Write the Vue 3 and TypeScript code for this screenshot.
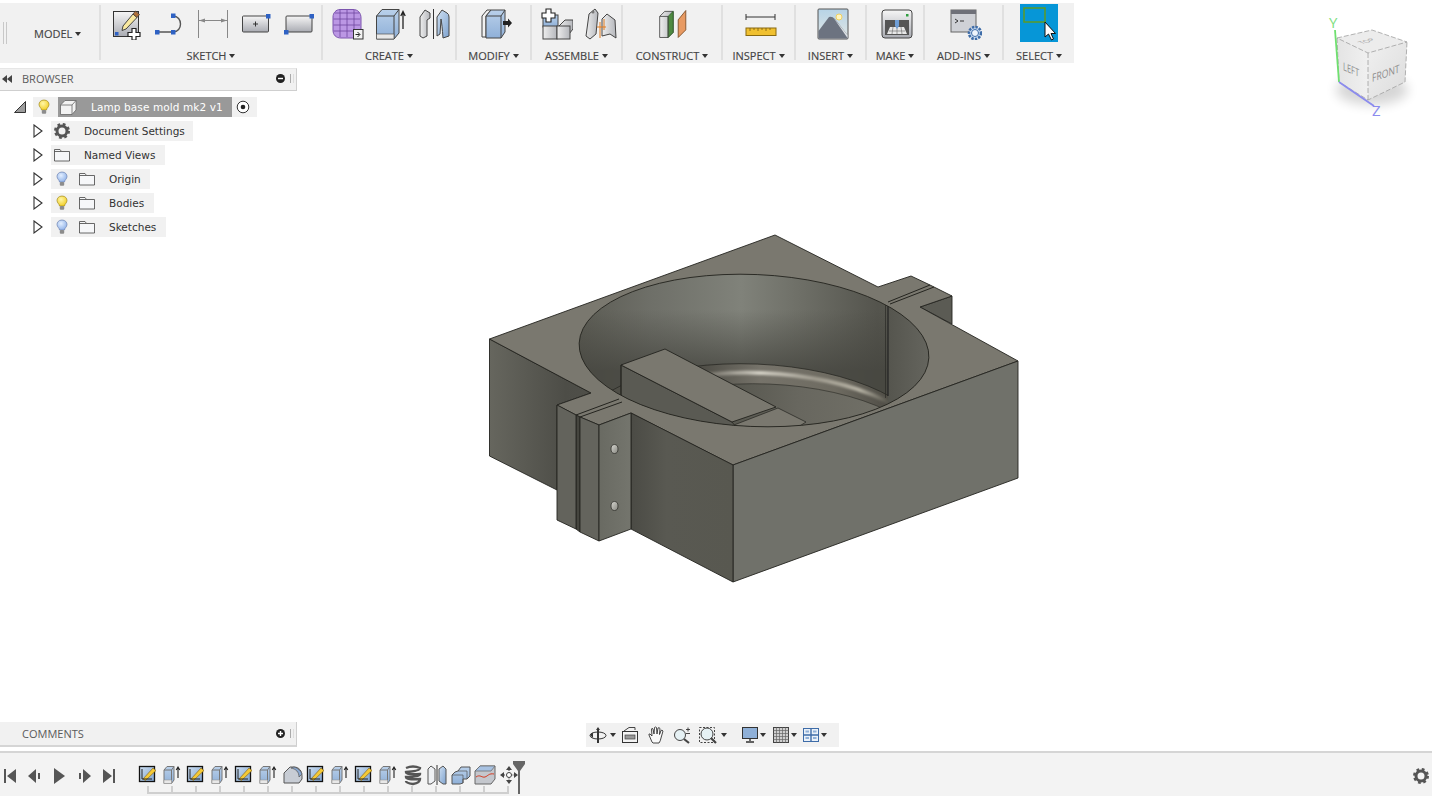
<script setup lang="ts">
interface Tool { id: string; big?: boolean }
interface Group { label: string; cls: string; gap: string; tools: Tool[] }
const groups: Group[] = [
  { label: 'SKETCH', cls: 'w222', gap: 'g11', tools: [{ id: 'i-sketch' }, { id: 'i-line' }, { id: 'i-dim' }, { id: 'i-crect' }, { id: 'i-rect' }] },
  { label: 'CREATE', cls: 'w134', gap: 'g11', tools: [{ id: 'i-form' }, { id: 'i-extrude' }, { id: 'i-mirror' }] },
  { label: 'MODIFY', cls: 'w75', gap: 'g11', tools: [{ id: 'i-press' }] },
  { label: 'ASSEMBLE', cls: 'w91', gap: 'g12', tools: [{ id: 'i-comp' }, { id: 'i-joint' }] },
  { label: 'CONSTRUCT', cls: 'w100', gap: 'g11', tools: [{ id: 'i-plane' }] },
  { label: 'INSPECT', cls: 'w73', gap: 'g11', tools: [{ id: 'i-measure' }] },
  { label: 'INSERT', cls: 'w71', gap: 'g11', tools: [{ id: 'i-image' }] },
  { label: 'MAKE', cls: 'w58', gap: 'g11', tools: [{ id: 'i-make' }] },
  { label: 'ADD-INS', cls: 'w79', gap: 'g11', tools: [{ id: 'i-addin' }] },
]
const timeline: string[] = ['t-sk', 't-ex', 't-sk', 't-ex', 't-sk', 't-ex', 't-fillet', 't-sk', 't-ex', 't-sk', 't-ex', 't-coil', 't-mirror', 't-combine', 't-section', 't-move']
const playback: string[] = ['p-first', 'p-prev', 'p-play', 'p-next', 'p-last']
interface Node { name: string; bulb?: string; icon: string; width: string }
const nodes: Node[] = [
  { name: 'Document Settings', icon: 'gear', width: 'w142' },
  { name: 'Named Views', icon: 'folder', width: 'w114' },
  { name: 'Origin', bulb: 'b-blue', icon: 'folder', width: 'w99' },
  { name: 'Bodies', bulb: 'b-yellow', icon: 'folder', width: 'w103' },
  { name: 'Sketches', bulb: 'b-blue', icon: 'folder', width: 'w115' },
]
</script>

<template>
  <div class="app">
    <svg class="sprite" width="0" height="0" aria-hidden="true">
      <defs>
        <linearGradient id="gGray" x1="0" y1="0" x2="0" y2="1"><stop offset="0" stop-color="#f6f6f6" /><stop offset="1" stop-color="#a9abb2" /></linearGradient>
        <linearGradient id="gBlue" x1="0" y1="0" x2="1" y2="1"><stop offset="0" stop-color="#cfe0f2" /><stop offset="1" stop-color="#7fa3cf" /></linearGradient>
        <linearGradient id="gBlue2" x1="0" y1="0" x2="0" y2="1"><stop offset="0" stop-color="#b9d0ea" /><stop offset="1" stop-color="#8fb0d8" /></linearGradient>
        <linearGradient id="gSilver" x1="0" y1="0" x2="1" y2="0"><stop offset="0" stop-color="#eeeeee" /><stop offset="1" stop-color="#b5b7bc" /></linearGradient>
        <linearGradient id="gSky" x1="0" y1="0" x2="0" y2="1"><stop offset="0" stop-color="#b6d3e6" /><stop offset="1" stop-color="#e2e6e4" /></linearGradient>
        <radialGradient id="gBulbY" cx=".4" cy=".35" r=".7"><stop offset="0" stop-color="#fff6a8" /><stop offset="1" stop-color="#f2cd1f" /></radialGradient>
        <radialGradient id="gBulbB" cx=".4" cy=".35" r=".7"><stop offset="0" stop-color="#e3efff" /><stop offset="1" stop-color="#8db0e8" /></radialGradient>

        <symbol id="i-sketch" viewBox="0 0 32 32">
          <rect x="2.500" y="3.500" width="25" height="25" fill="url(#gGray)" stroke="#333" stroke-width="1" />
          <path d="M12 18 L22 6 L26 9.500 L15 21 L11 22.500Z" fill="#f9e9a0" stroke="#333" stroke-width=".9" />
          <path d="M22 6 L24.500 3 L28.500 6.500 L26 9.500Z" fill="#b0703a" stroke="#333" stroke-width=".7" />
          <rect x="4" y="24" width="3.500" height="3.500" fill="#2f62c4" />
          <path d="M21 20.500h4v4h4v4h-4v3.500h-4v-3.500h-4v-4h4z" fill="#fff" stroke="#222" stroke-width="1.200" />
        </symbol>
        <symbol id="i-line" viewBox="0 0 32 32">
          <path d="M3 24 H19 M19 24 C29 24 29 8 19 8" fill="none" stroke="#555" stroke-width="1.400" />
          <rect x="1" y="22" width="4.500" height="4.500" fill="#2f62c4" /><rect x="17" y="22" width="4.500" height="4.500" fill="#2f62c4" /><rect x="17" y="5.500" width="4.500" height="4.500" fill="#2f62c4" />
        </symbol>
        <symbol id="i-dim" viewBox="0 0 32 32">
          <path d="M1.500 2 V30 M30.500 2 V30 M2 12.500 H30" stroke="#888" stroke-width="1" fill="none" />
          <path d="M2 12.500 L8 10.500 V14.500Z M30 12.500 L24 10.500 V14.500Z" fill="#888" />
        </symbol>
        <symbol id="i-crect" viewBox="0 0 32 32">
          <rect x="2.500" y="8" width="26" height="16" rx="1" fill="url(#gGray)" stroke="#444" /><path d="M13 16h5M15.500 13.500v5" stroke="#333" />
          <rect x="26" y="6" width="4.500" height="4.500" fill="#2f62c4" />
        </symbol>
        <symbol id="i-rect" viewBox="0 0 32 32">
          <rect x="3" y="8" width="26" height="16" rx="1" fill="url(#gGray)" stroke="#444" />
          <rect x="26.500" y="6" width="4.500" height="4.500" fill="#2f62c4" /><rect x="1" y="22" width="4.500" height="4.500" fill="#2f62c4" />
        </symbol>
        <symbol id="i-form" viewBox="0 0 32 32">
          <path d="M8 1.500 H21 C26 1.500 29 5 29 10 V22 C29 27 26 30 21 30 H9 C4 30 1 27 1 22 V9 C1 5 4 1.500 8 1.500Z" fill="#bb97e4" stroke="#7c55ae" />
          <path d="M1.500 11 H28 M1.500 17 H28 M1.500 23 H28 M8 2 V29 M15 2 V29 M22 2 V29 M3 5 H27" stroke="#6f489f" stroke-width=".8" fill="none" />
          <rect x="21.500" y="21.500" width="9.500" height="9.500" fill="#f3f3f3" stroke="#333" /><path d="M23.500 26.500h4M25.500 24l2.500 2.500-2.500 2.500" stroke="#222" fill="none" />
        </symbol>
        <symbol id="i-extrude" viewBox="0 0 32 32">
          <path d="M1.500 8 L7 1.500 H24 V25 L19 31 H1.500Z" fill="url(#gBlue2)" stroke="#444" /><path d="M1.500 8 H19 V31 M19 8 L24 1.500" fill="none" stroke="#444" />
          <path d="M1.500 26 H19 V31 H1.500Z" fill="#e8e8e8" stroke="#555" stroke-width=".7" />
          <path d="M28 21 V5 M25.800 8 L28 3.500 L30.200 8" fill="none" stroke="#222" stroke-width="1.300" />
        </symbol>
        <symbol id="i-mirror" viewBox="0 0 32 32">
          <path d="M15.500 1 V31" stroke="#333" stroke-width="1" />
          <path d="M2 28 V9 L7 2 L12 5 V10 L9 12 V28 L5 30Z" fill="url(#gSilver)" stroke="#444" />
          <path d="M19 28 V9 L24 2 L29 5 Q31 6 31 9 V28 L25 30 Q24 16 23 11 L22 26Z" fill="url(#gBlue)" stroke="#444" />
        </symbol>
        <symbol id="i-press" viewBox="0 0 32 32">
          <path d="M2 8 L7 2 H11 L6 8 V29 H2Z" fill="#f1f1f1" stroke="#444" />
          <path d="M6 8 L11 2 H25 V24 L21 30 H6Z" fill="url(#gBlue2)" stroke="#444" /><path d="M6 8 H21 V30 M21 8 L25 2" stroke="#444" fill="none" />
          <path d="M23 13 H28 V10.500 L32 15 L28 19.500 V17 H23Z" fill="#222" />
        </symbol>
        <symbol id="i-comp" viewBox="0 0 32 32">
          <rect x="2" y="7" width="15" height="12" fill="url(#gBlue2)" stroke="#444" />
          <path d="M17 19 L24 12 H32 V21 L28 26" fill="url(#gSilver)" stroke="#444" />
          <rect x="2" y="18" width="14" height="13" fill="url(#gSilver)" stroke="#444" /><rect x="16" y="18" width="13" height="13" fill="url(#gSilver)" stroke="#444" />
          <path d="M5 1h5v4h4v5h-4v4H5v-4H1V5h4z" fill="#fff" stroke="#222" stroke-width="1.100" />
        </symbol>
        <symbol id="i-joint" viewBox="0 0 32 32">
          <path d="M1 28 L4 6 L10 1 L13 5 L11 26 L5 31Z" fill="url(#gSilver)" stroke="#444" />
          <path d="M17 28 V11 L22 6 L30 12 L31 30 L25 26Z" fill="url(#gSilver)" stroke="#444" />
          <path d="M15 14 V30 M12 19 H21 M19 11 V22" stroke="#e07a1f" stroke-width="1" fill="none" />
          <circle cx="8" cy="4" r="1.500" fill="#777" />
        </symbol>
        <symbol id="i-plane" viewBox="0 0 38 34">
          <path d="M2 8 L8 2 H18 V27 L12 33 H2Z" fill="url(#gSilver)" stroke="#444" />
          <path d="M12 8 L18 2 V27 L12 33Z" fill="#4f8a42" stroke="#2f5d29" />
          <path d="M2 8 H12 V33" fill="none" stroke="#444" />
          <path d="M24 12 L33 1 V24 L24 33Z" fill="#e89a62" stroke="#7a4a22" />
        </symbol>
        <symbol id="i-measure" viewBox="0 0 32 32">
          <path d="M1 6 V12 M30 6 V12 M1 9 H30" stroke="#333" stroke-width="1" fill="none" />
          <rect x="1" y="20" width="30" height="7.500" fill="#f0c030" stroke="#8a6a10" />
          <path d="M5 20v3M9 20v2M13 20v3M17 20v2M21 20v3M25 20v2" stroke="#7a5c10" stroke-width=".8" />
        </symbol>
        <symbol id="i-image" viewBox="0 0 32 32">
          <rect x="1" y="1" width="30" height="30" rx="1" fill="url(#gSky)" stroke="#555" />
          <circle cx="22" cy="9" r="3" fill="#fff5c0" stroke="#f0d060" />
          <path d="M1.500 30.500 V23 L12 9 Q15 8 18 11 L30.500 27 V30.500Z" fill="#6c7380" />
          <path d="M16 9 L30.500 27 V30 Z" fill="#dfe3e6" />
        </symbol>
        <symbol id="i-make" viewBox="0 0 32 32">
          <rect x="1" y="2" width="30" height="28" rx="3" fill="url(#gGray)" stroke="#444" />
          <rect x="4" y="12" width="24" height="15" fill="#555" />
          <path d="M6 26 L9 19 H23 L26 26Z" fill="#e8e8e8" /><path d="M8 23h16M12 19l-1 7M16 19v7M20 19l1 7" stroke="#777" stroke-width=".7" />
          <path d="M14 12 H18 V18 L16 21 L14 18Z" fill="#6f9ed6" />
          <rect x="25" y="6" width="2.500" height="2.500" fill="#2f9e3f" />
        </symbol>
        <symbol id="i-addin" viewBox="0 0 32 32">
          <rect x="1" y="2" width="25" height="22" fill="#cfd1d6" stroke="#666" /><rect x="1" y="2" width="25" height="4" fill="#6e7078" />
          <path d="M5 11 l3 2 -3 2 M10 13h4" stroke="#222" fill="none" stroke-width=".9" />
          <circle cx="25" cy="25" r="6" fill="#cfe0f4" stroke="#3e6ca8" stroke-width="2.600" stroke-dasharray="2.400 1.100" />
          <circle cx="25" cy="25" r="3.500" fill="#eef4fb" stroke="#3e6ca8" stroke-width="1" />
        </symbol>

        <symbol id="t-sk" viewBox="0 0 22 22">
          <rect x="1.500" y="2.500" width="15" height="15" fill="url(#gBlue)" stroke="#111" stroke-width="1.300" />
          <path d="M5 15 L15 4 L18 6.500 L7.500 16.500Z" fill="#f5c936" stroke="#7a5a10" stroke-width=".6" />
          <path d="M4 5 V15 H14" stroke="#222" fill="none" stroke-width="1" />
        </symbol>
        <symbol id="t-ex" viewBox="0 0 22 22">
          <path d="M2 6 L5 2.500 H12 V16 L9.500 19.500 H2Z" fill="url(#gBlue2)" stroke="#777" /><path d="M2 6 H9.500 V19.500 M9.500 6 L12 2.500" stroke="#777" fill="none" />
          <path d="M2 16 H9.500 V19.500 H2Z" fill="#e8e8e8" stroke="#999" stroke-width=".6" />
          <path d="M16 14 V3.500 M14.200 6 L16 3 L17.800 6" stroke="#222" stroke-width="1.100" fill="none" />
        </symbol>
        <symbol id="t-fillet" viewBox="0 0 22 22">
          <path d="M2 9 L8 3 H12 C17 3 20 7 20 12 V15 L17 19 H2Z" fill="#c7ccd4" stroke="#555" />
          <path d="M9 4 C14 5 17 8 17 13 L20 10 C19 7 16 4 12 3Z" fill="#8aa9d3" stroke="#555" stroke-width=".7" />
        </symbol>
        <symbol id="t-coil" viewBox="0 0 22 22">
          <path d="M4 4 Q11 1 18 4 Q18 7 4 8 Q4 11 18 10 Q18 13 4 13 Q4 16 18 15 Q18 19 11 20 Q4 19 4 17" fill="none" stroke="#555" stroke-width="2.400" />
        </symbol>
        <symbol id="t-mirror" viewBox="0 0 22 22">
          <path d="M11 1 V21" stroke="#333" /><path d="M2 5 L5 2 L9 5 V17 L5 20 H2Z" fill="#eef0f3" stroke="#555" /><path d="M20 5 L17 2 L13 5 V17 L17 20 H20Z" fill="url(#gBlue)" stroke="#555" />
        </symbol>
        <symbol id="t-combine" viewBox="0 0 22 22">
          <path d="M8 7 L11 3 H20 V12 L17 15 H13 V19 L10 20 H2 V11 L5 8Z" fill="url(#gBlue2)" stroke="#555" />
          <path d="M2 11 H13 V19 M8 7 H17 V15" fill="none" stroke="#555" stroke-width=".7" />
        </symbol>
        <symbol id="t-section" viewBox="0 0 22 22">
          <path d="M1 7 L6 2 H21 V15 L17 20 H1Z" fill="#c4c7cd" stroke="#666" />
          <path d="M1 7 L6 2 H21 L17 7Z" fill="#a8c2e2" stroke="#666" stroke-width=".7" />
          <path d="M2 13 C6 10 8 14 11 13 S15 9 20 10" stroke="#d53a20" stroke-width="1" fill="none" />
        </symbol>
        <symbol id="t-move" viewBox="0 0 22 22">
          <circle cx="11" cy="11" r="2.500" fill="#fff" stroke="#444" />
          <path d="M11 2 L14 6 H8Z M11 20 L14 16 H8Z M2 11 L6 8 V14Z M20 11 L16 8 V14Z" fill="#444" />
          <path d="M6 11 H8.500 M13.500 11 H16 M11 6 V8.500 M11 13.500 V16" stroke="#444" stroke-dasharray="1 1" />
        </symbol>

        <symbol id="p-first" viewBox="0 0 20 20"><path d="M4 3 H6 V17 H4Z M16 3 V17 L7 10Z" fill="#555" /></symbol>
        <symbol id="p-prev" viewBox="0 0 20 20"><path d="M11 3 V17 L3 10Z M13 7 H15 V13 H13Z" fill="#555" /></symbol>
        <symbol id="p-play" viewBox="0 0 20 20"><path d="M5 2 L16 10 L5 18Z" fill="#555" /></symbol>
        <symbol id="p-next" viewBox="0 0 20 20"><path d="M9 3 V17 L17 10Z M5 7 H7 V13 H5Z" fill="#555" /></symbol>
        <symbol id="p-last" viewBox="0 0 20 20"><path d="M4 3 V17 L13 10Z M14 3 H16 V17 H14Z" fill="#555" /></symbol>

        <symbol id="b-yellow" viewBox="0 0 16 16"><path d="M8 1 C11.500 1 13 3.500 13 5.500 C13 8 10.500 9 10.500 11 H5.500 C5.500 9 3 8 3 5.500 C3 3.500 4.500 1 8 1Z" fill="url(#gBulbY)" stroke="#a08a20" stroke-width=".7" /><rect x="5.800" y="11" width="4.400" height="3.800" rx="1" fill="#8c8c8c" /></symbol>
        <symbol id="b-blue" viewBox="0 0 16 16"><path d="M8 1 C11.500 1 13 3.500 13 5.500 C13 8 10.500 9 10.500 11 H5.500 C5.500 9 3 8 3 5.500 C3 3.500 4.500 1 8 1Z" fill="url(#gBulbB)" stroke="#6d83b0" stroke-width=".7" /><rect x="5.800" y="11" width="4.400" height="3.800" rx="1" fill="#8c8c8c" /></symbol>
        <symbol id="folder" viewBox="0 0 16 14"><path d="M.5 13 V1.500 H6 L7.500 3.500 H15.500 V13Z M.5 3.500 H7.500" fill="#f6f7f9" stroke="#444" stroke-width=".8" /></symbol>
        <symbol id="gear" viewBox="0 0 16 16"><circle cx="8" cy="8" r="5" fill="none" stroke="#555" stroke-width="3" /><circle cx="8" cy="8" r="6.500" fill="none" stroke="#555" stroke-width="3" stroke-dasharray="2.600 2.500" /></symbol>
      </defs>
    </svg>

    <!-- free canvas: the 3D model and the view cube -->
    <svg class="canvas" width="1432" height="796" viewBox="0 0 1432 796">
      <defs>
        <linearGradient id="leftOuter" x1="0" y1="0" x2="1" y2="0"><stop offset="0" stop-color="#66665e" /><stop offset=".75" stop-color="#4d4d47" /><stop offset="1" stop-color="#4f4f49" /></linearGradient>
        <linearGradient id="leftFront" x1="0" y1="0" x2="1" y2="0"><stop offset="0" stop-color="#4b4b45" /><stop offset=".35" stop-color="#595952" /><stop offset="1" stop-color="#585850" /></linearGradient>
        <linearGradient id="wall" gradientUnits="userSpaceOnUse" x1="580" y1="0" x2="930" y2="0"><stop offset="0" stop-color="#5c5c54" /><stop offset=".2" stop-color="#6e6f68" /><stop offset=".46" stop-color="#80827a" /><stop offset=".62" stop-color="#6f7068" /><stop offset=".85" stop-color="#54544d" /><stop offset="1" stop-color="#5a5a52" /></linearGradient>
        <linearGradient id="wallShade" x1="0" y1="0" x2="0" y2="1"><stop offset="0" stop-color="#45453f" stop-opacity="0" /><stop offset="1" stop-color="#45453f" stop-opacity=".8" /></linearGradient>
        <linearGradient id="ring" gradientUnits="userSpaceOnUse" x1="700" y1="0" x2="890" y2="0"><stop offset="0" stop-color="#4f4e47" /><stop offset=".3" stop-color="#76736a" /><stop offset=".7" stop-color="#6e6b61" /><stop offset="1" stop-color="#4e4c45" /></linearGradient>
        <linearGradient id="ringHi" gradientUnits="userSpaceOnUse" x1="700" y1="0" x2="885" y2="0"><stop offset="0" stop-color="#6a675f" /><stop offset=".3" stop-color="#d2cfc4" /><stop offset=".6" stop-color="#a09c90" /><stop offset=".85" stop-color="#b5b1a3" /><stop offset="1" stop-color="#5a584f" /></linearGradient>
        <linearGradient id="floor" gradientUnits="userSpaceOnUse" x1="720" y1="0" x2="890" y2="0"><stop offset="0" stop-color="#55554d" /><stop offset=".45" stop-color="#68675f" /><stop offset="1" stop-color="#727168" /></linearGradient>
        <linearGradient id="rPanel" x1="0" y1="0" x2="1" y2="0"><stop offset="0" stop-color="#55554e" /><stop offset="1" stop-color="#6c6c65" /></linearGradient>
        <linearGradient id="tabFront" x1="0" y1="0" x2="1" y2="0"><stop offset="0" stop-color="#696a62" /><stop offset="1" stop-color="#74756d" /></linearGradient>
        <linearGradient id="holeFill" x1="0" y1="0" x2="1" y2="1"><stop offset="0" stop-color="#d8d8d2" /><stop offset="1" stop-color="#85857e" /></linearGradient>
        <linearGradient id="cubeL" x1="0" y1="0" x2="1" y2="0"><stop offset="0" stop-color="#e4e4e4" /><stop offset="1" stop-color="#f0f0f0" /></linearGradient>
        <linearGradient id="cubeR" x1="0" y1="0" x2="1" y2="1"><stop offset="0" stop-color="#f0f0f0" /><stop offset="1" stop-color="#dcdcdc" /></linearGradient>
        <filter id="blur6" x="-40%" y="-40%" width="180%" height="180%"><feGaussianBlur stdDeviation="6" /></filter>
        <filter id="blur1" x="-10%" y="-20%" width="120%" height="140%"><feGaussianBlur stdDeviation="1" /></filter>
        <clipPath id="cavity"><ellipse cx="754" cy="350.500" rx="175" ry="76" transform="rotate(2.400 754 350.500)" /></clipPath>
      </defs>

      <g stroke="#24241f" stroke-width=".9" stroke-linejoin="round">
        <polygon points="489.500,339 591,393 557,405 557,490 489.500,456" fill="url(#leftOuter)" />
        <polygon points="920,307 952,296 952,324" fill="#5b5b54" />
        <polygon points="489.500,339 775,235 878,287 911,276 930,285 934,287 952,296 920,307 1018,361 733,465 631,413 599,425 580,417 576,415 557,405 591,393" fill="#7a786f" />
        <polygon points="733,465 1018,361 1018,478 733,582" fill="#70716a" />
        <polygon points="631,413 733,465 733,582 631,529" fill="url(#leftFront)" />
        <polygon points="576,415 580,417 580,532 576,529" fill="#45453f" />
        <polygon points="557,405 576,415 576,529 557,520" fill="#63635c" />
        <polygon points="580,417 599,425 599,541 580,532" fill="#64645d" />
        <polygon points="599,425 631,413 631,529 599,541" fill="url(#tabFront)" />
      </g>
      <g stroke="#24241f" stroke-width="1" fill="none">
        <path d="M576 415 L619 399 M580 417 L622 402 M888 302 L930 285 M890 304 L934 287" />
      </g>
      <ellipse cx="614.500" cy="449" rx="3.500" ry="4.500" fill="url(#holeFill)" stroke="#33332e" stroke-width=".8" />
      <ellipse cx="614.500" cy="506" rx="3.500" ry="4.500" fill="url(#holeFill)" stroke="#33332e" stroke-width=".8" />

      <g clip-path="url(#cavity)">
        <rect x="570" y="265" width="370" height="170" fill="url(#wall)" />
        <rect x="570" y="310" width="320" height="60" fill="url(#wallShade)" />
        <rect x="570" y="370" width="320" height="70" fill="#45453f" fill-opacity=".8" />
        <ellipse cx="754" cy="440" rx="176" ry="76" transform="rotate(2.400 754 440)" fill="url(#ring)" stroke="#2a2a25" stroke-width=".8" />
        <ellipse cx="760" cy="449" rx="174" ry="76" transform="rotate(2.400 760 449)" fill="none" stroke="url(#ringHi)" stroke-width="4" filter="url(#blur1)" />
        <ellipse cx="766" cy="459" rx="170" ry="75" transform="rotate(2.400 766 459)" fill="url(#floor)" stroke="#33332d" stroke-width=".7" />
        <rect x="888" y="295" width="60" height="130" fill="url(#rPanel)" />
        <path d="M888 296 V396" stroke="#222" stroke-width="1.200" />
        <path d="M885.500 300 V398" stroke="#2a2a25" stroke-width=".7" />
        <polygon points="621,365 732,422 740,432 621,432" fill="#5a5a53" stroke="#24241f" stroke-width=".8" />
        <polygon points="734,425 778,408 806,422 790,432 740,432" fill="#7a786f" stroke="#24241f" stroke-width=".7" />
        <polygon points="621,365 665,349 776,407 732,422" fill="#7a786f" stroke="#24241f" stroke-width=".9" stroke-linejoin="round" />
        <path d="M621 365 V395" stroke="#24241f" stroke-width=".9" />
      </g>
      <ellipse cx="754" cy="350.500" rx="175" ry="76" transform="rotate(2.400 754 350.500)" fill="none" stroke="#24241f" stroke-width=".9" />

      <!-- view cube -->
      <ellipse cx="1372" cy="90" rx="36" ry="15" fill="#000" opacity=".16" filter="url(#blur6)" />
      <polygon points="1337,38 1372,30 1407,42 1405,82 1368,100 1339,82" fill="#ececec" />
      <polygon points="1337,38 1368,53 1368,100 1339,82" fill="url(#cubeL)" />
      <polygon points="1368,53 1407,42 1405,82 1368,100" fill="url(#cubeR)" />
      <path d="M1337 38 L1372 30 L1407 42 L1368 53Z M1337 38 L1339 82 L1368 100 L1405 82 L1407 42 M1368 53 V100" fill="none" stroke="#a0a0a0" stroke-width=".8" stroke-dasharray="5 2" />
      <path d="M1335 30 L1339 82" stroke="#6fe06f" stroke-width="1.800" />
      <path d="M1339 82 L1374 106" stroke="#8b8bee" stroke-width="1.800" />
      <text x="1329" y="28" class="axis y">Y</text>
      <text x="1372" y="116" class="axis z">Z</text>
      <text class="cube-t" transform="matrix(.68 .3 0 1 1343 70)">LEFT</text>
      <text class="cube-t" transform="matrix(.78 -.27 0 1 1372 82)">FRONT</text>
      <text class="cube-s" transform="matrix(.8 -.22 .75 .3 1362 44)">TOP</text>
    </svg>

    <header class="toolbar">
      <div class="model-tab">
        <i class="grip"></i>
        <span class="tb-label model-label">MODEL<i class="caret"></i></span>
      </div>
      <section v-for="g in groups" :key="g.label" class="group" :class="g.cls">
        <div class="tools" :class="g.gap">
          <svg v-for="(t, i) in g.tools" :key="i" class="tool" width="32" height="32"><use :href="'#' + t.id" width="32" height="32" /></svg>
        </div>
        <span class="tb-label">{{ g.label }}<i class="caret"></i></span>
      </section>
      <section class="group w70 last">
        <div class="tools">
          <div class="select-icon">
            <svg width="38" height="38" viewBox="0 0 38 38">
              <rect x="4" y="4" width="21" height="14" fill="none" stroke="#5d9a24" stroke-width="1.500" />
              <path d="M25 18 V33 L28.500 30 L31.500 36 L33.500 35 L31 29.500 H35.500Z" fill="#fff" stroke="#111" stroke-width="1" />
            </svg>
          </div>
        </div>
        <span class="tb-label">SELECT<i class="caret"></i></span>
      </section>
    </header>

    <main class="stage">
      <section class="panel browser">
        <svg width="10" height="8" viewBox="0 0 10 8" class="collapse"><path d="M5 0 V8 L0 4Z M10 0 V8 L5 4Z" fill="#444" /></svg>
        <span class="panel-title">BROWSER</span>
        <svg class="pin" width="9" height="9" viewBox="0 0 9 9"><circle cx="4.500" cy="4.500" r="4.500" fill="#222" /><path d="M2 4.500 H7" stroke="#fff" stroke-width="1.400" /></svg>
        <i class="mini-grip"></i>
      </section>

      <ul class="tree">
        <li class="row root">
          <svg class="twist" width="12" height="12" viewBox="0 0 12 12"><path d="M.5 11.500 L11.500 .5 V11.500Z" fill="#9c9c9c" stroke="#333" /></svg>
          <div class="chip chip-root">
            <svg class="bulb" width="16" height="16"><use href="#b-yellow" width="16" height="16" /></svg>
            <span class="doc-name">
              <svg class="cube-ico" width="17" height="15" viewBox="0 0 17 15"><path d="M.5 5 L5 .5 H16 V10 L12 14.500 H.5Z" fill="#f2f2f2" stroke="#666" stroke-width=".8" /><path d="M.5 5 H12 V14.500 M12 5 L16 .5" fill="none" stroke="#666" stroke-width=".8" /></svg>
              <span class="doc-text">Lamp base mold mk2 v1</span>
            </span>
            <svg class="radio" width="14" height="14" viewBox="0 0 14 14"><circle cx="7" cy="7" r="5.800" fill="#fff" stroke="#333" stroke-width="1" /><circle cx="7" cy="7" r="2.300" fill="#222" /></svg>
          </div>
        </li>
        <li v-for="n in nodes" :key="n.name" class="row">
          <svg class="twist" width="10" height="14" viewBox="0 0 10 14"><path d="M1 1 L9 7 L1 13Z" fill="#fff" stroke="#333" stroke-width="1.100" /></svg>
          <div class="chip" :class="n.width">
            <svg v-if="n.bulb" class="bulb small" width="16" height="16"><use :href="'#' + n.bulb" width="16" height="16" /></svg>
            <svg class="node-ico" :class="{ 'with-bulb': n.bulb }" width="16" height="16"><use :href="'#' + n.icon" width="16" height="16" /></svg>
            <span class="node-name">{{ n.name }}</span>
          </div>
        </li>
      </ul>

      <div class="bottom-row">
        <section class="panel comments">
          <span class="panel-title">COMMENTS</span>
          <svg class="pin" width="9" height="9" viewBox="0 0 9 9"><circle cx="4.500" cy="4.500" r="4.500" fill="#222" /><path d="M2 4.500 H7 M4.500 2 V7" stroke="#fff" stroke-width="1.400" /></svg>
          <i class="mini-grip"></i>
        </section>
        <nav class="navbar">
          <svg class="nav-ico" width="18" height="18" viewBox="0 0 18 18"><path d="M9 1 L11 4 H10 V17 H8 V4 H7Z" fill="#333" /><ellipse cx="9" cy="9.500" rx="8" ry="3.500" fill="none" stroke="#333" /><path d="M1 9 L4 6.500 V12Z" fill="#333" /></svg>
          <i class="caret m3"></i>
          <svg class="nav-ico m5" width="18" height="18" viewBox="0 0 18 18"><rect x="1.500" y="5.500" width="15" height="11" fill="#f4f4f4" stroke="#333" /><rect x="4" y="9" width="10" height="4" fill="#999" stroke="#444" stroke-width=".7" /><path d="M3 5 L8 1.500 H14 V4" fill="none" stroke="#444" /></svg>
          <svg class="nav-ico m8" width="18" height="18" viewBox="0 0 18 18"><path d="M5 16 L2 9 Q1.500 7.500 3 8 L5 10 L4.500 3 Q5 1.500 6 3 L7 8 L7.500 1.500 Q8.500 .5 9.500 1.500 L10 8 L11 2 Q12 1 13 2.500 L12.500 8.500 L14 4.500 Q15 3.500 16 5 L14 12 Q13.500 15 12 17 H6Z" fill="#fafafa" stroke="#333" stroke-width=".9" /></svg>
          <svg class="nav-ico m8" width="18" height="18" viewBox="0 0 18 18"><circle cx="7" cy="9" r="5.500" fill="#e6f1f4" stroke="#444" /><path d="M11 13 L16 17" stroke="#444" stroke-width="2.200" /><path d="M13 3.500h4M15 1.500v4M13 7.500h4" stroke="#333" stroke-width=".9" /></svg>
          <svg class="nav-ico m8" width="18" height="18" viewBox="0 0 18 18"><rect x=".5" y="1.500" width="15" height="15" fill="none" stroke="#444" stroke-dasharray="2 1.500" /><circle cx="8" cy="8" r="6" fill="#e6f1f4" stroke="#444" /><path d="M12 12 L17 17" stroke="#444" stroke-width="2.200" /></svg>
          <i class="caret m4"></i>
          <svg class="nav-ico m14" width="18" height="18" viewBox="0 0 18 18"><rect x="1.500" y="1.500" width="15" height="11" fill="#8fb0d8" stroke="#333" /><path d="M9 12.500 V15 M5 16 H13" stroke="#333" stroke-width="1.400" /></svg>
          <i class="caret m1"></i>
          <svg class="nav-ico m6" width="18" height="18" viewBox="0 0 18 18"><rect x="1.500" y="1.500" width="15" height="15" fill="#cfcfcf" stroke="#444" /><path d="M4.500 1.500v15M7.500 1.500v15M10.500 1.500v15M13.500 1.500v15M1.500 4.500h15M1.500 7.500h15M1.500 10.500h15M1.500 13.500h15" stroke="#666" stroke-width=".7" /></svg>
          <i class="caret m1"></i>
          <svg class="nav-ico m5" width="18" height="18" viewBox="0 0 18 18"><rect x="1.500" y="2.500" width="15" height="13" fill="#eaf1f9" stroke="#3e6ca8" /><path d="M9 2.500 V15.500 M1.500 9 H16.500" stroke="#3e6ca8" stroke-width="1.400" /><path d="M3.500 5.500h3.500M11 5.500h3.500M3.500 12h3.500M11 12h3.500" stroke="#8fb0d8" stroke-width="2" /></svg>
          <i class="caret m1"></i>
        </nav>
      </div>
    </main>

    <footer class="timeline">
      <div class="playback">
        <svg v-for="p in playback" :key="p" width="20" height="20"><use :href="'#' + p" width="20" height="20" /></svg>
      </div>
      <div class="track">
        <div class="steps">
          <svg v-for="(t, i) in timeline" :key="i" class="step" width="22" height="22"><use :href="'#' + t" width="22" height="22" /></svg>
        </div>
        <div class="ruler"></div>
        <div class="marker"><svg width="12" height="33" viewBox="0 0 12 33"><path d="M0 0 H12 V3 L7 10 V33 H5 V10 L0 3Z" fill="#666" /></svg></div>
      </div>
      <svg class="settings" width="16" height="16"><use href="#gear" width="16" height="16" /></svg>
    </footer>
  </div>
</template>

<style scoped>
.app {
  position: relative;
  width: 1432px;
  height: 796px;
  overflow: hidden;
  background: #fff;
  display: flex;
  flex-direction: column;
  font-family: "Open Sans", "Liberation Sans", sans-serif;
  color: #444;
}
.sprite { position: absolute; }
.canvas { position: absolute; left: 0; top: 0; }
.axis { font: 15px "Open Sans", sans-serif; }
.axis.y { fill: #7fe07f; }
.axis.z { fill: #8b8bee; }
.cube-t { font: 11px "Open Sans", sans-serif; fill: #8c8c8c; }
.cube-s { font: 9px "Open Sans", sans-serif; fill: #9a9a9a; }

.toolbar {
  position: relative;
  display: flex;
  width: 1074px;
  height: 60px;
  margin-top: 3px;
  background: #f1f1f1;
}
.model-tab { width: 101px; position: relative; display: flex; align-items: center; padding: 0 0 0 34px; box-sizing: border-box; flex: none; border-right: 2px solid #e0e0e0; margin: 2px 0 3px; }
.grip { position: absolute; left: 3px; top: 17px; width: 2px; height: 22px; border-left: 1px solid #c8c8c8; border-right: 1px solid #c8c8c8; }
.group { flex: none; box-sizing: border-box; display: flex; flex-direction: column; align-items: center; border-right: 2px solid #e0e0e0; margin: 2px 0 3px; padding-top: 3px; height: 55px; position: relative; }
.group.last { border-right: 0; }
.w222 { width: 222px; } .w134 { width: 134px; } .w75 { width: 75px; } .w91 { width: 91px; } .w100 { width: 100px; }
.w73 { width: 73px; } .w71 { width: 71px; } .w58 { width: 58px; } .w79 { width: 79px; } .w70 { width: 70px; }
.tools { display: flex; height: 32px; align-items: center; justify-content: center; padding-left: 4px; }
.last .tools { padding-left: 0; }
.g11 { gap: 11px; } .g12 { gap: 12px; }
.tool { display: block; overflow: visible; }
.tb-label { position: absolute; top: 44px; left: 0; right: 0; text-align: center; font-size: 11px; line-height: 14px; color: #444; white-space: nowrap; -webkit-text-stroke: .15px #444; }
.model-label { position: static; text-align: left; margin-top: 2px; }
.caret { display: inline-block; width: 0; height: 0; margin-left: 3px; border-left: 3px solid transparent; border-right: 3px solid transparent; border-top: 4px solid #333; vertical-align: 2px; }
.select-icon { width: 38px; height: 38px; background: #0696d7; margin-top: -2px; }
.select-icon svg { display: block; }

.stage { position: relative; flex: 1; display: flex; flex-direction: column; min-height: 0; padding-top: 5px; }
.panel { width: 297px; box-sizing: border-box; height: 23px; background: #f1f1f1; border-right: 1px solid #cfcfcf; border-bottom: 1px solid #cfcfcf; display: flex; align-items: center; flex: none; }
.browser { border-top: 1px solid #e6e6e6; padding-bottom: 2px; }
.collapse { margin-left: 2px; }
.panel-title { margin-left: 10px; font-size: 11px; color: #5a5a5a; }
.comments { border-bottom: 2px solid #d5d5d5; height: 25px; }
.comments .panel-title { margin-left: 22px; }
.pin { margin-left: auto; }
.mini-grip { width: 2px; height: 9px; margin: 0 2px 0 5px; border-left: 1px solid #aaa; border-right: 1px solid #ddd; }
.tree { list-style: none; margin: 4px 0 0; padding: 0; flex: 1; font-family: "DejaVu Sans", sans-serif; font-size: 10.500px; color: #333; }
.row { height: 24px; display: flex; align-items: center; padding-left: 33px; }
.row .twist { flex: none; width: 10px; margin-right: 8px; }
.row.root { padding-left: 14px; }
.row.root .twist { width: 12px; margin-right: 7px; }
.chip { height: 20px; display: flex; align-items: center; background: #f1f1f1; box-sizing: border-box; padding-left: 3px; }
.chip-root { width: 224px; }
.w142 { width: 142px; } .w114 { width: 114px; } .w99 { width: 99px; } .w103 { width: 103px; } .w115 { width: 115px; }
.bulb { flex: none; }
.doc-name { display: flex; align-items: center; height: 20px; width: 174px; background: #999; margin-left: 6px; color: #fff; }
.cube-ico { margin-left: 2px; flex: none; }
.doc-text { margin-left: 14px; white-space: nowrap; letter-spacing: .1px; }
.radio { margin-left: 4px; }
.node-ico { flex: none; }
.node-ico.with-bulb { margin-left: 9px; }
.node-name { margin-left: 14px; white-space: nowrap; }

.bottom-row { display: flex; align-items: center; height: 25px; flex: none; margin-bottom: 4px; }
.navbar { margin-left: 289px; width: 253px; height: 24px; background: #f1f1f1; display: flex; align-items: center; padding-left: 3px; box-sizing: border-box; }
.nav-ico { flex: none; display: block; }
.navbar .caret { margin-left: 0; flex: none; }
.navbar .m1 { margin-left: 1px; } .navbar .m3 { margin-left: 3px; } .navbar .m4 { margin-left: 4px; }
.m5 { margin-left: 5px; } .m6 { margin-left: 6px; } .m8 { margin-left: 8px; } .m14 { margin-left: 14px; }

.timeline { position: relative; height: 45px; flex: none; box-sizing: border-box; border-top: 2px solid #d5d5d5; background: #f3f3f3; display: flex; }
.playback { width: 138px; flex: none; display: flex; gap: 4.700px; padding-top: 13px; box-sizing: border-box; align-items: flex-start; }
.playback svg { display: block; flex: none; }
.track { position: relative; width: 384px; padding-top: 11px; box-sizing: border-box; }
.steps { display: flex; gap: 2px; }
.step { display: block; flex: none; }
.ruler { margin-left: 9px; width: 360px; height: 6px; border-bottom: 2px solid #cfcfcf; border-right: 2px solid #cfcfcf; background: repeating-linear-gradient(90deg, #cfcfcf 0 2px, transparent 2px 24px); }
.marker { position: absolute; left: 375px; top: 8px; }
.marker svg { display: block; }
.settings { position: absolute; right: 3px; top: 15px; }
</style>
